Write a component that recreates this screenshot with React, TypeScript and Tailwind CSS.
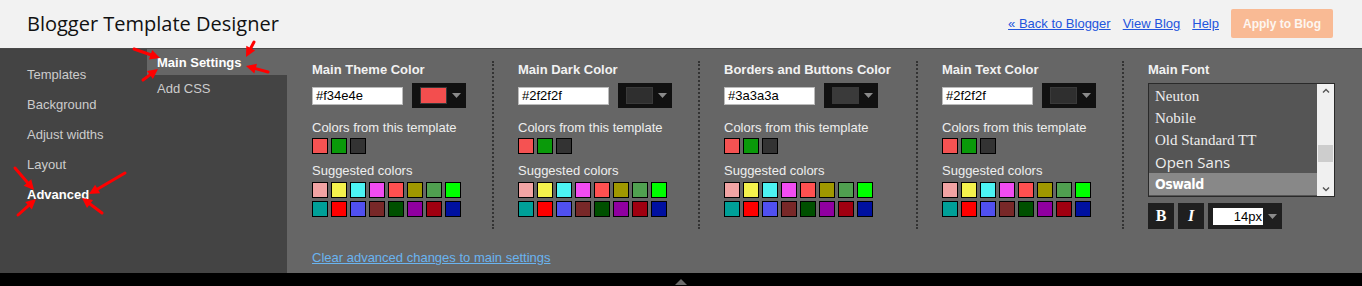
import React from "react";

const templateColors = ["bg-[#f55252]", "bg-[#0a9a0a]", "bg-[#333333]"];
const suggestedRow1 = [
  "bg-[#f2a4a4]",
  "bg-[#f4f24c]",
  "bg-[#4cf4f4]",
  "bg-[#f24cf2]",
  "bg-[#ff5050]",
  "bg-[#a09800]",
  "bg-[#50a050]",
  "bg-[#00ff00]",
];
const suggestedRow2 = [
  "bg-[#00a098]",
  "bg-[#ff0000]",
  "bg-[#5050f0]",
  "bg-[#782828]",
  "bg-[#005000]",
  "bg-[#9000a0]",
  "bg-[#a00010]",
  "bg-[#0010a0]",
];

function Tri({ className = "" }: { className?: string }) {
  return (
    <svg width="9" height="5" viewBox="0 0 9 5" className={className}>
      <polygon points="0,0 9,0 4.5,5" fill="#8a8a8a" />
    </svg>
  );
}

function Swatch({ c }: { c: string }) {
  return <div className={`w-4 h-4 border border-black ${c}`} />;
}

function ColorColumn({
  title,
  hex,
  pickerBg,
  widthClass,
  first,
}: {
  title: string;
  hex: string;
  pickerBg: string;
  widthClass: string;
  first?: boolean;
}) {
  return (
    <div
      className={`${widthClass} ${first ? "" : "pl-[24px]"} box-content shrink-0 border-r-2 border-dotted border-[#333] pt-[1px] pb-[2px]`}
    >
      <div className="text-[13px] leading-[16px] font-bold text-[#f2f2f2]">{title}</div>
      <div className="mt-[5px] flex items-center h-[25px] gap-[9px]">
        <div className="w-[91px] h-[18px] bg-white border border-[#bbb] flex items-center pl-[3px] text-[13px] text-black leading-none">
          {hex}
        </div>
        <div className="w-[54px] h-[25px] bg-[#111] flex items-center pl-[8px] gap-[5px]">
          <div className={`w-[27px] h-[17px] border border-[#3a3a3a] ${pickerBg}`} />
          <Tri />
        </div>
      </div>
      <div className="mt-[12px] text-[13px] leading-[16px] text-[#eee]">Colors from this template</div>
      <div className="mt-[2px] flex gap-[3px]">
        {templateColors.map((c, i) => (
          <Swatch key={i} c={c} />
        ))}
      </div>
      <div className="mt-[9px] text-[13px] leading-[16px] text-[#eee]">Suggested colors</div>
      <div className="mt-[3px] flex gap-[3px]">
        {suggestedRow1.map((c, i) => (
          <Swatch key={i} c={c} />
        ))}
      </div>
      <div className="mt-[3px] flex gap-[3px]">
        {suggestedRow2.map((c, i) => (
          <Swatch key={i} c={c} />
        ))}
      </div>
    </div>
  );
}

function Arrow({ x1, y1, x2, y2 }: { x1: number; y1: number; x2: number; y2: number }) {
  const dx = x2 - x1;
  const dy = y2 - y1;
  const len = Math.sqrt(dx * dx + dy * dy);
  const ux = dx / len;
  const uy = dy / len;
  const hl = 10;
  const hw = 5;
  const bx = x2 - ux * hl;
  const by = y2 - uy * hl;
  const p1 = `${x2},${y2}`;
  const p2 = `${bx - uy * hw},${by + ux * hw}`;
  const p3 = `${bx + uy * hw},${by - ux * hw}`;
  return (
    <g>
      <line x1={x1} y1={y1} x2={bx} y2={by} stroke="#ff0000" strokeWidth="3" strokeLinecap="round" />
      <polygon points={`${p1} ${p2} ${p3}`} fill="#ff0000" />
    </g>
  );
}

export default function App() {
  return (
    <div className="relative w-[1362px] h-[286px] overflow-hidden font-['Liberation_Sans',Arial,sans-serif]">
      {/* Header */}
      <div className="h-[49px] bg-[#f2f2f2] border-b border-[#4a4a4a] flex items-center pl-[27px] pr-[29px]">
        <div className="font-['Open_Sans',sans-serif] text-[20px] text-[#111] leading-none pb-[1px]">
          Blogger Template Designer
        </div>
        <div className="ml-auto flex items-center">
          <a className="text-[13px] text-[#2255dd] underline mr-[12px]">« Back to Blogger</a>
          <a className="text-[13px] text-[#2255dd] underline mr-[12px]">View Blog</a>
          <a className="text-[13px] text-[#2255dd] underline mr-[12px]">Help</a>
          <div className="w-[102px] h-[29px] rounded-[2px] bg-[#f9ba94] flex items-center justify-center text-[12px] font-bold text-[#fdf6f0] mb-[1px]">
            Apply to Blog
          </div>
        </div>
      </div>

      {/* Main */}
      <div className="flex h-[224px]">
        {/* Sidebar */}
        <div className="w-[147px] bg-[#444] pt-[11px] pl-[27px] text-[13px] leading-[30px] text-[#ccc]">
          <div>Templates</div>
          <div>Background</div>
          <div>Adjust widths</div>
          <div>Layout</div>
          <div className="font-bold text-white">Advanced</div>
        </div>
        {/* Sub nav */}
        <div className="w-[140px] bg-[#444] text-[13px]">
          <div className="h-[26px] bg-[#666] pl-[10px] pt-[1px] flex items-center font-bold text-white">Main Settings</div>
          <div className="pl-[10px] pt-[1px] leading-[26px] text-[#ccc]">Add CSS</div>
        </div>
        {/* Content */}
        <div className="flex-1 bg-[#666] pl-[25px] flex flex-col">
          <div className="flex pt-[12px]">
            <ColorColumn first title="Main Theme Color" hex="#f34e4e" pickerBg="bg-[#f34e4e]" widthClass="w-[178px] pr-[2px]" />
            <ColorColumn title="Main Dark Color" hex="#2f2f2f" pickerBg="bg-[#2f2f2f]" widthClass="w-[178px] pr-[2px]" />
            <ColorColumn title="Borders and Buttons Color" hex="#3a3a3a" pickerBg="bg-[#3a3a3a]" widthClass="w-[190px] pr-[2px]" />
            <ColorColumn title="Main Text Color" hex="#2f2f2f" pickerBg="bg-[#2f2f2f]" widthClass="w-[178px] pr-[2px]" />
            {/* Main font */}
            <div className="pl-[24px] pt-[1px]">
              <div className="text-[13px] leading-[16px] font-bold text-[#f2f2f2]">Main Font</div>
              <div className="mt-[5px] w-[187px] h-[114px] border border-[#2a2a2a] bg-[#555] flex">
                <div className="flex-1 pt-[1px] text-[#eee]">
                  <div className="h-[22px] pl-[6px] flex items-center font-['Liberation_Serif',serif] text-[15px]">Neuton</div>
                  <div className="h-[22px] pl-[6px] flex items-center font-['Liberation_Serif',serif] text-[15px]">Nobile</div>
                  <div className="h-[22px] pl-[6px] flex items-center font-['Liberation_Serif',serif] text-[15px]">Old Standard TT</div>
                  <div className="h-[22px] pl-[6px] flex items-center font-['Open_Sans',sans-serif] text-[15px]">Open Sans</div>
                  <div className="h-[22px] pl-[6px] flex items-center bg-[#888] text-white font-['DejaVu_Sans_Condensed','Liberation_Sans_Narrow',sans-serif] font-bold text-[14px] tracking-[-0.5px]">Oswald</div>
                </div>
                <div className="w-[17px] bg-[#f0f0f0] flex flex-col items-center justify-between py-[4px] relative">
                  <svg width="8" height="5" viewBox="0 0 8 5">
                    <polyline points="1,4.5 4,1.5 7,4.5" fill="none" stroke="#555" strokeWidth="1.4" />
                  </svg>
                  <div className="absolute left-[1px] top-[61px] w-[15px] h-[17px] bg-[#cdcdcd]" />
                  <svg width="8" height="5" viewBox="0 0 8 5">
                    <polyline points="1,0.5 4,3.5 7,0.5" fill="none" stroke="#555" strokeWidth="1.4" />
                  </svg>
                </div>
              </div>
              <div className="mt-[6px] flex gap-[4px]">
                <div className="w-[26px] h-[26px] bg-[#1f1f1f] flex items-center justify-center font-['Liberation_Serif',serif] font-bold text-[16px] text-white">B</div>
                <div className="w-[26px] h-[26px] bg-[#1f1f1f] flex items-center justify-center font-['Liberation_Serif',serif] italic font-bold text-[16px] text-white">I</div>
                <div className="w-[74px] h-[26px] bg-[#1f1f1f] flex items-center pl-[5px] gap-[5px]">
                  <div className="w-[50px] h-[17px] bg-white text-[13px] text-black leading-none flex items-center justify-end pr-[1px]">14px</div>
                  <Tri />
                </div>
              </div>
            </div>
          </div>
          <div className="mt-[16px]">
            <a className="text-[13px] leading-[16px] text-[#6ab4f0] underline">Clear advanced changes to main settings</a>
          </div>
        </div>
      </div>

      {/* Bottom bar */}
      <div className="h-[13px] bg-black flex justify-center items-end pb-[1px]">
        <svg width="12" height="6" viewBox="0 0 12 6" className="ml-[-1px]">
          <polygon points="0,6 12,6 6,0" fill="#6a6a6a" />
        </svg>
      </div>

      {/* Red annotation arrows */}
      <svg className="absolute left-0 top-0 pointer-events-none" width="1362" height="286">
        <Arrow x1={134} y1={49} x2={160} y2={58} />
        <Arrow x1={143} y1={80} x2={158} y2={69} />
        <Arrow x1={254} y1={42} x2={246} y2={57} />
        <Arrow x1={268} y1={72} x2={246} y2={66} />
        <Arrow x1={15} y1={168} x2={34} y2={190} />
        <Arrow x1={18} y1={215} x2={36} y2={199} />
        <Arrow x1={125} y1={173} x2={89} y2={194} />
        <Arrow x1={102} y1={213} x2={82} y2={198} />
      </svg>
    </div>
  );
}
